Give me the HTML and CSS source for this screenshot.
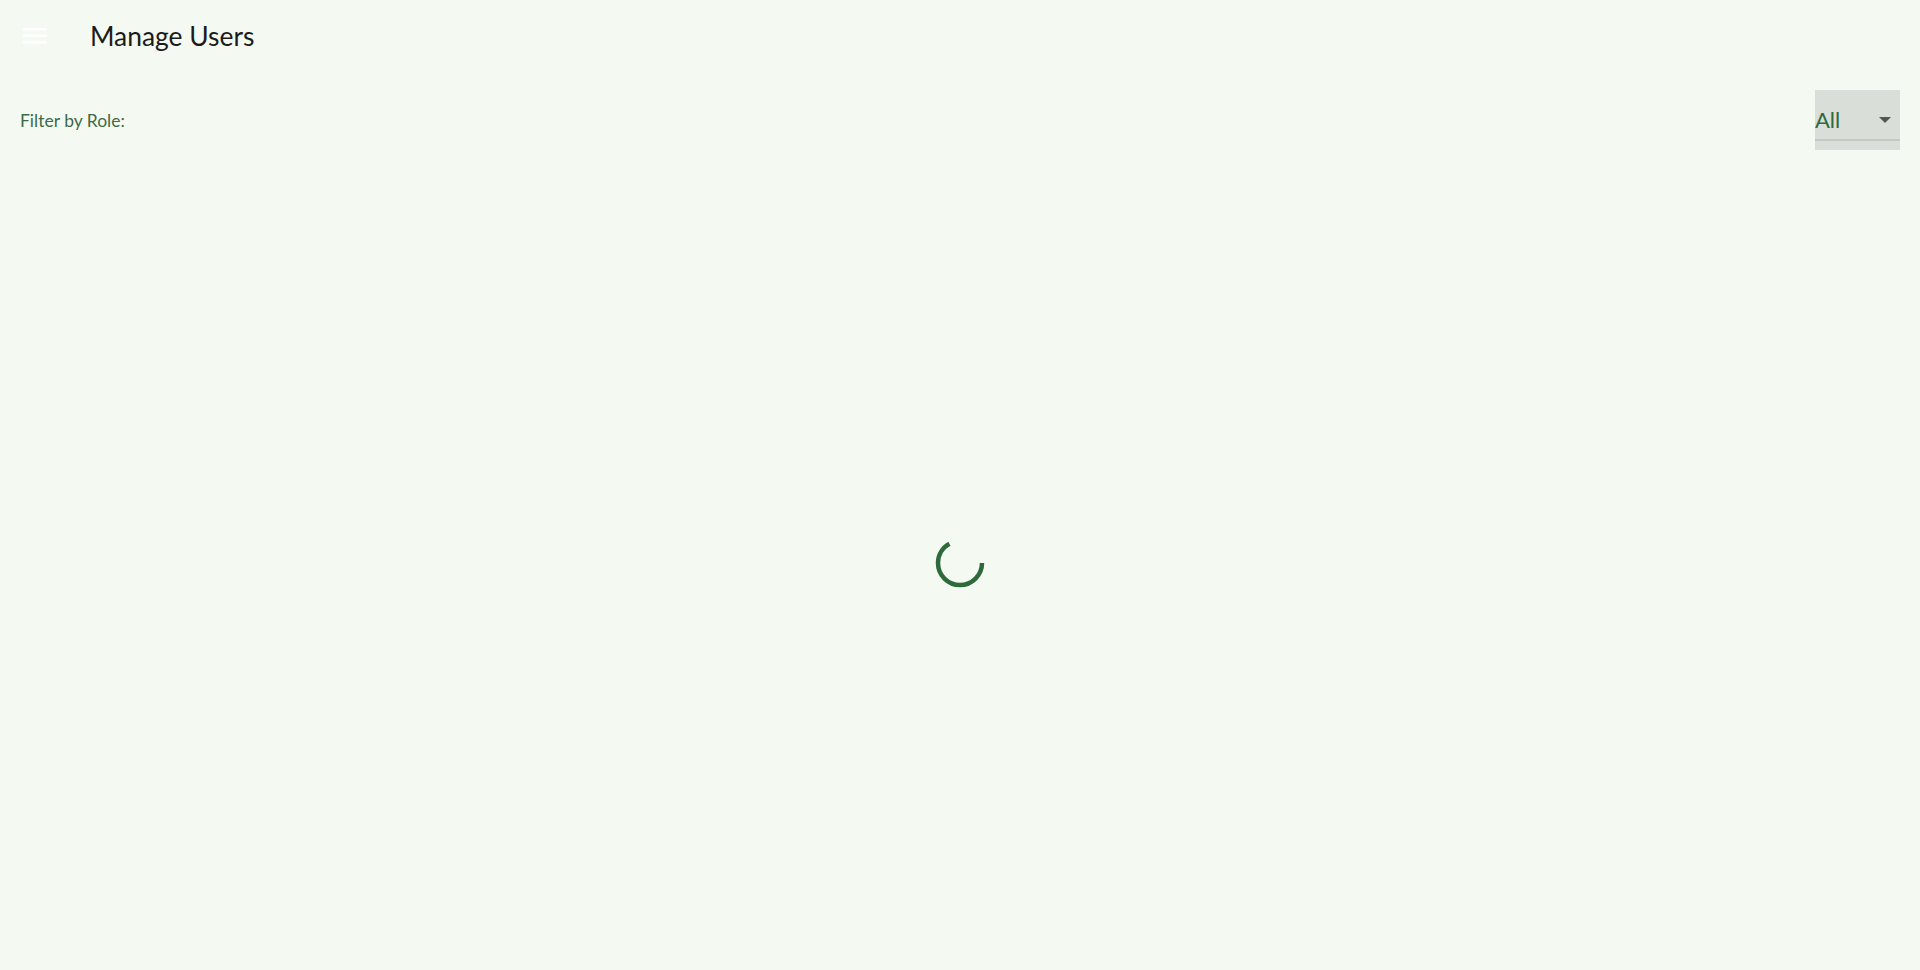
FILE: index.html
```html
<!DOCTYPE html>
<html lang="en">
<head>
<meta charset="utf-8">
<title>Manage Users</title>
<link rel="stylesheet" href="styles.css">
</head>
<body>
<div class="page">
  <header class="topbar">
    <button class="menu-btn" aria-label="Menu">
      <svg width="24" height="18" viewBox="0 0 24 18"><rect x="0" y="1" width="24" height="2.5" fill="#fff"/><rect x="0" y="7.5" width="24" height="2.5" fill="#fff"/><rect x="0" y="14" width="24" height="2.5" fill="#fff"/></svg>
    </button>
    <h1 class="title">Manage Users</h1>
  </header>
  <div class="filter-row">
    <span class="filter-label">Filter by Role:</span>
    <div class="select">
      <div class="select-field">
        <span class="select-value">All</span>
        <svg class="select-arrow" width="12" height="6" viewBox="0 0 12 6"><path d="M0 0 L12 0 L6 6 Z" fill="#555"/></svg>
      </div>
    </div>
  </div>
  <main class="content">
    <svg class="spinner" width="52" height="52" viewBox="0 0 52 52">
      <circle cx="26" cy="26" r="22" fill="none" stroke="#2e6a3b" stroke-width="4.5" stroke-dasharray="92 200"/>
    </svg>
  </main>
</div>
</body>
</html>
```
FILE: styles.css
```css
html, body {
  margin: 0;
  padding: 0;
  height: 100%;
}
body {
  background: #f4faf1;
  font-family: Lato, "Open Sans", sans-serif;
}
.page {
  display: flex;
  flex-direction: column;
  height: 100%;
}
.topbar {
  display: flex;
  align-items: center;
  height: 72px;
  padding-left: 23px;
  box-sizing: border-box;
}
.menu-btn {
  background: none;
  border: 0;
  padding: 0;
  width: 24px;
  height: 18px;
  display: flex;
  cursor: pointer;
}
.title {
  margin: 0 0 0 43px;
  font-weight: 400;
  font-size: 26.4px;
  color: #1b1c1a;
}
.filter-row {
  display: flex;
  align-items: center;
  justify-content: space-between;
  padding: 18px 20px 0 20px;
}
.filter-label {
  font-size: 17.5px;
  color: #3e6a48;
}
.select {
  width: 85px;
  height: 60px;
  background: #d9ded8;
  box-sizing: border-box;
  padding-bottom: 9px;
  display: flex;
}
.select-field {
  flex: 1;
  display: flex;
  align-items: center;
  justify-content: space-between;
  padding: 10px 9px 0 0;
  border-bottom: 2px solid #c4c9c3;
}
.select-value {
  font-size: 22px;
  color: #2e6a3b;
}
.content {
  flex: 1;
  display: flex;
  align-items: center;
  justify-content: center;
  padding-top: 6px;
}
```
